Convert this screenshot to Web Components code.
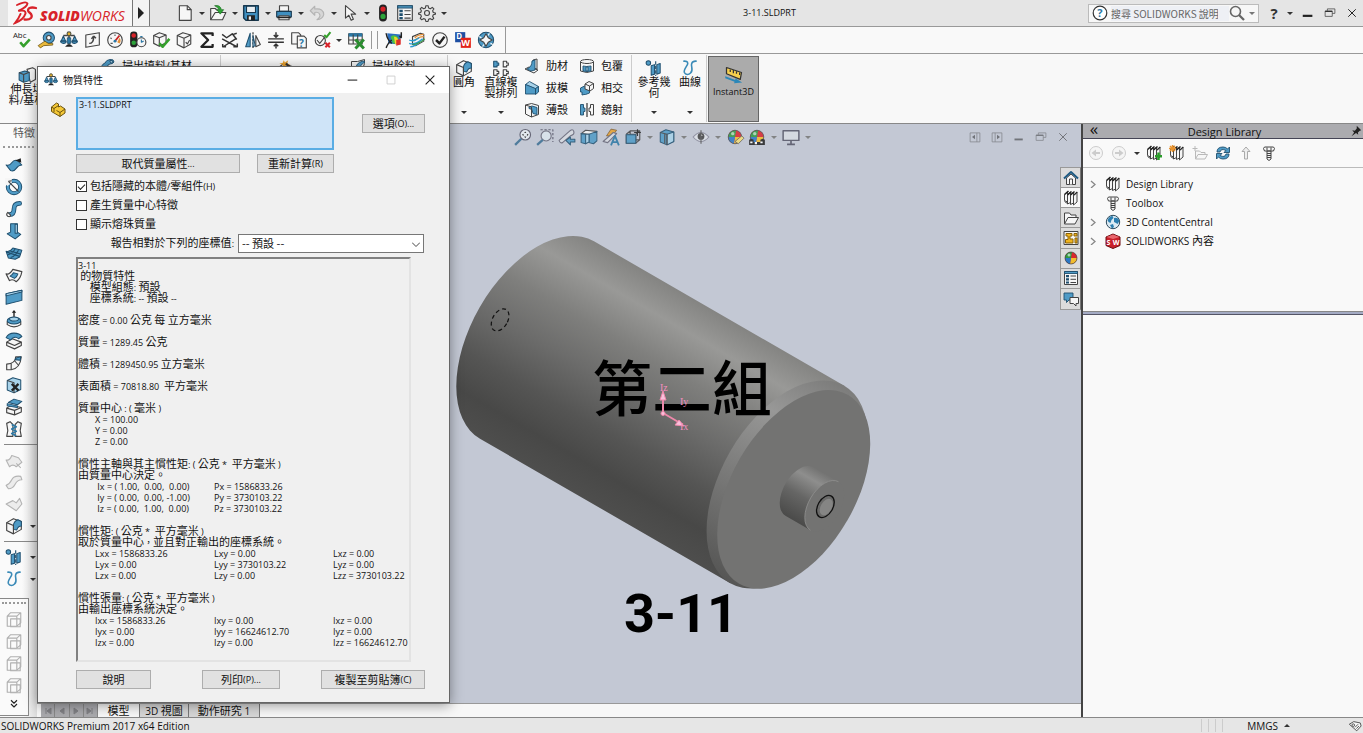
<!DOCTYPE html>
<html lang="zh-Hant">
<head>
<meta charset="utf-8">
<title>3-11.SLDPRT</title>
<style>
html,body{margin:0;height:100%;overflow:hidden}
body{font:10px/14px "Open Sans","Noto Sans CJK TC",sans-serif;color:#111}
</style>
</head>
<body>
<sw-app></sw-app>
<script>
/* ---------- icons, all on a 16 x 16 grid ---------- */
const books = '<path class="w" d="M1.500 4.500l3-2.500v10l-3-1.500zM4.500 4.500l3-2.500M4.500 4.500v9l-3-2M4.500 5l3-3v10.500l-3 1.500zM7.500 5l3-3v11l-3 1.500zM10.500 5l3.500-3v10l-3.500 3z"/><path class="k" d="M1 4l4-3.500 1 1-4 3.500zM4 4.500l4-3.500 1 1-4 3.500zM7 4.500l4-3.500 1 1-4 3.500zM10.500 5l3.500-3.500.5 1-3 3z"/>';
const ball = '<circle cx="8" cy="8" r="6" fill="#d9272e"/><path d="M8 8L2 8A6 6 0 0 1 5 2.800Q8 1.500 9 2.200z" fill="#2f9a41"/><path d="M8 8L14 8A6 6 0 0 1 7 13.900z" fill="#f2bd2c"/><path d="M8 8L2 8A6 6 0 0 0 7 13.900z" fill="#2b78c5"/><circle cx="8" cy="8" r="6" fill="none" stroke="#444" stroke-width=".7"/><circle cx="6" cy="5" r="1.500" fill="#fff" opacity=".6"/>';
const scale = '<path class="n" d="M8 2v11M3 4h10" stroke-width="1.300"/><circle cx="8" cy="2.500" r="1.700" fill="#e8b32d" stroke="#554"/><path class="b" d="M1 9l2-4.500 2 4.500zM11 9l2-4.500 2 4.500z"/><path class="b" d="M.5 9h5a2.500 2 0 0 1-5 0zM10.500 9h5a2.500 2 0 0 1-5 0z"/><path fill="#2b78a5" stroke="#1f4f6e" stroke-width=".7" d="M6.500 6h3v5h-3z"/><path class="k" d="M4.500 14l2-2h3l2 2z"/>';
const cube = '<path class="n" d="M2 5.500h8.500v8H2zM2 5.500l3.500-3h8.500l-3.500 3M14 2.500v8l-3.500 3M5.500 2.500v8L2 13.500M5.500 10.500H14"/>';
const refgeo = '<circle class="b" cx="3" cy="3.500" r="2"/><path class="b" d="M5.500 6l3-1v8.500l-3 1zM10.500 5l3-1v8.500l-3 1z"/><path stroke="#1f4f6e" stroke-dasharray="3 1" d="M9.500 2v13"/>';
const curve = '<path fill="none" stroke="#3a8ab7" stroke-width="1.400" d="M2 2q4-.500 4 2c0 2-4 5-3 8 1 2.500 4 2 5.500.5 3-3 0-6 1-8.500q1-2.500 4.500-2"/>';
const fillet = '<path class="w" d="M1.500 5l6-3.500 7 2.500v7l-7 4-6-3z"/><path class="b" d="M7.500 8q0-4 4-5.500l3 1.500v4q-3 0-4 3.500l-3-.5z"/><path class="n" d="M1.500 5l6 2.500v7.500"/>';
const bolt = '<path class="w" d="M3.500 2h9l1 1.500-1 2.500h-9l-1-2.500zM6 6h4v8l-2 1.500L6 14z"/><path class="n" d="M6 8.500h4M6 10.500h4M6 12.500h4M6 2.500v3M10 2.500v3"/>';
const list = '<path class="w" d="M1.500 1.500h13v13h-13z"/><path class="b" d="M1.500 1.500h13v2h-13z"/><path fill="#1f4f6e" d="M3 5h3v2.300H3zM3 8.300h3v2.300H3zM3 11.500h3v2H3z"/><path class="n" d="M7.500 6h5.500M7.500 9.300h5.500M7.500 12.500h5.500"/>';
const restore = '<path class="n" d="M4.500 5V2.500h10v6H11M1.500 5.500h9.500v7H1.500z"/><path class="k" d="M1.500 5h9.500v1.500H1.500z"/>';
const ICONS = {
  doc:'<path class="w" d="M3 1.500h7l3.500 3.500v9.500H3z"/><path class="n" d="M10 1.500V5h3.500"/>',
  open:'<path class="w" d="M1.500 14V4h4l1.500 1.500h3v2h5L12 14z"/><path class="n" d="M1.500 14l4-6.500h9.500"/><path fill="#2fa536" stroke="#1c6e22" stroke-width=".6" d="M5 1.500q5-1 6 3.500h2L10 9 7 5h2Q8 3 5 1.500z"/>',
  save:'<path d="M1.500 1.500h13v13h-11l-2-2z" fill="#3f8fc0" stroke="#17384f" stroke-width="1.300"/><path d="M4 2h8v5.500H4z" fill="#e8eef2" stroke="#17384f"/><path d="M4.500 10h7v4.500h-7z" fill="#222"/><path d="M6 11h2v3H6z" fill="#eee"/>',
  print:'<path class="w" d="M4 1.500h8v5H4z"/><path d="M1.500 6.500h13v5h-13z" fill="#3f8fc0" stroke="#17384f"/><path class="w" d="M3.500 10.500h9v3.500h-9z"/><path d="M2 12h12" stroke="#222" stroke-width="1.300"/>',
  undo:'<path d="M2 6l4-4v2.500q8-1 8 5-1 4-6 4.500 4-3 2-5.500-1-1.500-4-1V10z" fill="#d6d6d6" stroke="#b4b4b4"/>',
  cursor:'<path class="w" d="M4 1.500v11l3-2.500 2 4.500 2-1-2-4.500h4z"/>',
  traffic:'<rect x="4.500" y=".5" width="7" height="15" rx="3.500" fill="#222"/><circle cx="8" cy="4.500" r="2.300" fill="#d8232a"/><circle cx="8" cy="11" r="2.300" fill="#2da23a"/>',
  options:list,
  gear:'<g class="n"><circle cx="8" cy="8" r="2.200"/><path d="M7 1.500h2l.4 2 1.600.7 1.700-1.200 1.400 1.400L13 6l.6 1.600 1.900.4v1l-1.900.5L13 11l1 1.700-1.400 1.300-1.700-1-1.500.6-.5 1.900H7l-.5-1.900-1.500-.6-1.700 1L2 12.700 3 11l-.6-1.500L.5 9V8l1.900-.4L3 6 2 4.400 3.300 3 5 4.200l1.600-.7z"/></g>',
  abc:'<text x="-1" y="6" font-size="7" fill="#222">Abc</text><path fill="none" stroke="#35a02c" stroke-width="2.300" d="M5.500 10l3 3.500 5.500-6"/>',
  measure:'<circle class="b" cx="10.500" cy="6" r="5"/><circle class="w" cx="10.500" cy="6" r="2"/><path d="M1 13l6-4 3 2h4v1.500l-8 .5-3 2z" fill="#e9b93a" stroke="#6b5310" stroke-width=".7"/>',
  scale,
  section:'<path class="w" d="M2.500 3.500l12-2v11l-12 2z"/><path class="n" d="M5.500 11q4 0 4-6M9.500 4.500L7.500 7M9.500 4.500l2 2" stroke-width="1.300"/>',
  gauge:'<circle class="w" cx="8" cy="8" r="6.500"/><path d="M4 6l1 1M8 3v1.500M4 11h2" stroke="#555"/><path d="M8 9l4-5" stroke="#c22" stroke-width="1.500"/><path d="M12 6q2 3 0 5l-2-1z" fill="#e58f37"/><circle cx="8" cy="9" r="1.300" fill="#2b78a5"/>',
  trafficClock:'<rect x="1" y=".5" width="6.500" height="14" rx="3" fill="#222"/><circle cx="4.200" cy="4" r="2" fill="#d8232a"/><circle cx="4.200" cy="10.500" r="2" fill="#2da23a"/><circle class="w" cx="11" cy="10" r="4"/><path stroke="#2b78a5" fill="none" d="M11 7.500V10l2-1M10 5h2"/>',
  checkCube:'<path class="w" d="M1.500 4l5-2.500 6 2v7l-6 3-5-2.500z"/><path class="n" d="M1.500 4l5 2 6-2.500M6.500 6v7.500"/><path fill="none" stroke="#35a02c" stroke-width="2.300" d="M6.500 11l3 3 6-7"/>',
  cubeCheck:'<path class="w" d="M2 4l5-2.500 7 2v8l-6 3.500-6-3z"/><path class="n" d="M2 4l6 2.500 6-3M8 6.500V15M9.500 10l1.500 1.500 2-3.500"/>',
  sigma:'<path fill="none" stroke="#222" stroke-width="2" d="M13 4.500V2H3l6 6-6 6h10v-2.500"/>',
  deviation:'<path fill="none" stroke="#333" stroke-width="1.300" d="M1 3l4 3 5-3.500 4 5M1 7l13 7M13 7L2 14M11 14h3.500v-3M4.500 14H1.500v-2.500M11 3l3-1"/>',
  symmetry:'<path class="b" d="M1.500 14L5.500 2v12z"/><path class="w" d="M10.500 4l4 8-4 2z"/><path stroke="#333" stroke-dasharray="2 1" d="M8 1v14"/><path class="l" d="M8 4l2 9-2 1z"/>',
  thickness:'<path stroke="#333" stroke-width="1.300" fill="none" d="M1 7h14M1 10h14M8 1v4M6 3.500l2 2 2-2M8 15.500v-4M6 13.500l2-2 2 2"/>',
  compareDoc:'<path class="w" d="M1.500 1.500h6l2 2v8h-8z"/><path class="w" d="M6.500 4.500h6l2 2v8.500h-8z"/><text x="8" y="14" font-size="9" font-weight="700" fill="#2b78a5">?</text>',
  checkActive:'<circle class="w" cx="6.500" cy="8.500" r="4.500"/><path class="n" d="M3.500 8l2.500 3 4-5"/><path fill="none" stroke="#35a02c" stroke-width="1.800" d="M10 3.500l2 2L15.500 1"/><path stroke="#d8232a" stroke-width="1.800" d="M11 10.500l4 4M15 10.500l-4 4"/>',
  designTable:'<path class="w" d="M1.500 2.500h12v9h-12z"/><path fill="#2b78a5" d="M1.500 2h12v3h-12z"/><path class="n" d="M1.500 8h12M5.500 3v8.500M9.500 3v8.500"/><path stroke="#2a8c2f" stroke-width="2.600" d="M7.500 7.500l7.500 8M15 7.500l-7.500 8"/>',
  sim:'<path d="M2 2l12 1-1 9-10-1z" fill="#2b6fc0"/><path d="M5 5q4-3 7 1l-1 5H7z" fill="#4bc044"/><path d="M8 5q4 0 4 5l-3 2z" fill="#f1d52c"/><path d="M10 8l4-1v5l-4 1z" fill="#dd2f2a"/><path stroke="#222" fill="none" stroke-width="1.300" d="M1 2q1 6 5 9M14.500 1v5M13 4.500l1.500 2M6 8q-3 2-5 7"/>',
  flow:'<path class="w" d="M4 5l7-3 3 1v6l-7 4-3-1z"/><path fill="none" stroke="#e58f37" stroke-width="1.200" d="M6 6q3-3 8-3M5 9q4-4 9-4"/><path fill="none" stroke="#2b9ad0" stroke-width="1.200" d="M1 8q4 2 9-2M1 11q5 2 12-4M2 14q4 0 8-4"/><path fill="none" stroke="#3aa04a" d="M4 12q5 0 11-5"/>',
  okCircle:'<circle class="w" cx="8" cy="8" r="6.500"/><path fill="none" stroke="#222" stroke-width="2.200" d="M4.500 8l3 3 4.500-6"/>',
  dw:'<path d="M1 1h9v9H1z" fill="#1e4fa3"/><path d="M6 6h9v9H6z" fill="#e2231a"/><text x="2" y="7" font-size="7" font-weight="700" fill="#fff">D</text><text x="6.500" y="13.500" font-size="8" font-weight="700" fill="#fff">W</text>',
  compass:'<circle cx="8" cy="8" r="6.800" class="b"/><path class="w" d="M8 2.500l2 3.500 3.500 2L10 10l-2 3.500L6 10 2.500 8 6 6z"/><path stroke="#fff" d="M2 5l2 1M12 11l2 1M11 2l-1 2M5 14l1-2"/>',
  extrude:'<path class="w" d="M8 3l5-1.500 2.500 1.500v9L11 14.500z"/><path class="b" d="M1 6l5-1.500 4 1V13l-5 1.500-4-2z"/><path class="n" d="M1 6l4 1.500 5-2M5 7.500v7"/>',
  sweep:'<path class="b" d="M2 13q-2-6 3-8 1-3 5-3.500 4-.5 4 2.500-1 2-4 2l-2 1q0 4-3 6z"/><path class="l" d="M10 2.500q3-.5 3 1.500-2 2-3 0z"/>',
  wizard:'<path class="w" d="M1 8l5-4 8 3v6l-8 2-5-3z"/><path fill="#e9a12d" d="M6 1l1 2 3-2-1 3 3 1-4 1-2 2-1-3-3-1 3-.500z"/><path stroke="#333" stroke-width="2" d="M8 4l5 5"/>',
  cut:'<path class="w" d="M1.500 3.500h6l7-2v4l-3 9h-10z"/><path class="b" d="M6 12Q5 5 13 3l2 1Q9 7 10 13z"/>',
  fillet,
  pattern:'<path class="b" d="M1.500 2h3v1.500h1.500v2h-1.500V7h-3z"/><path class="w" d="M10 2h3v1.500h1.500v2H13V7h-3zM1.500 9.500h3V11h1.500v2h-1.500v1.500h-3zM10 9.500h3V11h1.500v2H13v1.500h-3z"/>',
  rib:'<path class="w" d="M1 11l4-2 9 3-4 3zM9 2l4-1v10l-4-1z"/><path class="b" d="M3 11q5-2 5-8l3-1v10l-4 1z"/>',
  draft:'<path class="l" d="M1.500 4.500l4-3 9 5-3 2.500z"/><path class="b" d="M1.500 4.500l10 4V14h-10zM11.500 8.500l3-2V12l-3 2.500z"/>',
  shell:'<path class="w" d="M1.500 3l6-1.500 7 2v9l-7 2.500-6-3z"/><path class="b" d="M5 5l3-1 5 1.500v7l-4-1-1-4-3-1z"/><path class="n" d="M1.500 3l6 2v10"/>',
  wrap:'<path class="w" d="M1.500 4v9q6 3 13 0V4z"/><ellipse class="w" cx="8" cy="3.500" rx="6.500" ry="2"/><path class="b" d="M4 8q3 1 8 0v5q-4 1-8 0z"/><path class="l" d="M7 9h2v4H7z"/>',
  intersect:'<path class="b" d="M1.500 8l4-2 5 1v6l-4 1.500H5L3 15v-3H1.500z"/><path class="w" d="M6 4l4-2.500 4.500 2v5L11 11 6 9z"/><path class="n" d="M6 4l4.500 2 4-2.500M10.500 6v5"/>',
  mirror:'<path class="b" d="M1.500 2.500h3V6H6v3.500H4.500V13h-3z"/><path class="w" d="M14.500 2.500h-3V6H10v3.500h1.500V13h3z"/><path stroke="#333" stroke-width="1.200" d="M8 1v14"/>',
  refgeo, curve,
  ruler:'<path d="M2 2l12 4-1 5.500L2 7z" fill="#f6cf4e" stroke="#333"/><path stroke="#333" d="M5 3.500v2M7.500 4v2.500M10 5v2M12.500 6v2"/><path fill="#2b87b8" d="M1 9l8 3 0-1.500 5.500 3.500-6.500.5.500-1.200L1 10.500z"/>',
  surfExtrude:'<path class="b" d="M1 8q3 1 5-2t5-2l4 4q-3 0-5 3t-5 2z"/><path d="M9 4l5-2 .5 4z" class="k"/>',
  revolve:'<circle cx="8" cy="8" r="5.500" fill="none" stroke="#1f4f6e" stroke-width="3.600"/><circle cx="8" cy="8" r="5.500" fill="none" stroke="#4f9bc6" stroke-width="2"/><path fill="#f6f6f6" d="M0 0h6v4.500L2 7 0 5z"/><path class="n" d="M3 3l9 9M3 3l3-.500"/>',
  sweep2:'<path fill="none" stroke="#1f4f6e" stroke-width="4.200" stroke-linecap="round" d="M4 13q4 0 4-5t5-5"/><path fill="none" stroke="#4f9bc6" stroke-width="2.600" stroke-linecap="round" d="M4 13q4 0 4-5t5-5"/><path class="w" d="M2.500 11q-2 2 0 3.500 2 1 2.500-1z"/>',
  lofted:'<path class="b" d="M5 1.500h6V9l3 2-5 4-7-4.500L5 9z"/><path class="l" d="M9 2h2v8H9z"/>',
  boundary:'<path class="b" d="M1 6.500q3 1 6-3l8 2-2 6-4 2-6-1z"/><path stroke="#1f4f6e" fill="none" d="M2 9.500q4 0 7-5M5 12q4-1 7-6.500M1 7l12 4M4 6l10 3"/>',
  fillSurf:'<path class="w" d="M1 7q3 1 6-4l8 2q-1 6-5 9-3-3-6-1z"/><path class="b" d="M4.500 9q2-1 3-3l4 1q-1 3-3 4z"/>',
  planar:'<path class="b" d="M1 5l14-3v9L1 14.500z"/><path class="l" d="M1 5l14-3v1.500L1 7z" stroke="none"/>',
  offset:'<path class="w" d="M2 10q6 4 12 0v3q-6 4-12 0z"/><ellipse class="b" cx="8" cy="9.500" rx="6" ry="3"/><ellipse class="l" cx="8" cy="8" rx="4" ry="1.800"/><path class="k" d="M8 0l2 2.500H8.600V6H7.400V2.500H6z"/>',
  thicken:'<path class="w" d="M1.500 9l5-3 8 3v3l-6 3-7-3z"/><path class="b" d="M1 5q2-4 7-4t7 3l-3 2Q9 3 5 7z"/><path class="n" d="M1.500 9l7 3 6-3"/>',
  flatten:'<path class="w" d="M1.500 9v5h4q8-1 9-11.500h-5q0 6-8 6.500z"/><path class="n" d="M5.500 8.500v5.500M8.500 6l3.500 4"/><path class="b" d="M10 3.500l4-1-.5 3-4.500-.5z"/>',
  deleteFace:'<path class="l" d="M2 4l5-2.500 7 2v8.500l-6 3-6-2.500z"/><path class="n" d="M2 4l6 2v9"/><path stroke="#222" stroke-width="2" d="M6 7l6 6M12 7l-6 6"/>',
  replaceFace:'<path class="b" d="M3 4l5-3 7 2-4 3z"/><path class="w" d="M1.500 9l4-2.500 9 2v4l-6 2.500-7-2z"/><path class="n" d="M1.500 9l7 2 6-2.500M8.500 11v4"/><path class="b" d="M2 5l9 2v1.500L2 7z"/>',
  knit:'<path class="w" d="M1.500 3l3-1.500L7 4v10.500H1.500l1-5zM14.500 3l-3-1.500L9 4v10.500h5.500l-1-5z"/><path stroke="#2b78a5" stroke-width="1.500" fill="none" d="M6 4l4 2-4 2 4 2-4 2 4 2"/>',
  dimSurf:'<path class="d" d="M1 8q3 1 5-4l6 2 3 4-5 4q-3-3-6 0z"/><path class="d" d="M10 11l4 4"/>',
  dimExtend:'<path class="d" d="M1 11q3-1 5-5t8-3l1 3q-4 0-6 4t-6 4z"/>',
  dimTrim:'<path class="d" d="M1 8l6-3 3 2 3-4 2 5-5 6z"/>',
  dimCube:'<g opacity=".4"><path class="n" d="M2 4.500h8.500v9H2zM2 4.500l3-3h9v9l-3.500 3M10.500 4.500l3.500-3"/><path class="n" d="M5 7h8.500v7H5z"/></g>',
  part:'<path d="M1.500 6l5-4 2 1v3l2-1 4.500 3v4l-5 3.500-8.500-5z" fill="#f5c836" stroke="#6b5310"/><path fill="none" stroke="#6b5310" d="M1.500 6l2.500 1.500 4.500-3M4 7.500V11M6.500 9.500l3.500 2 5-3.500M10 11.500v4"/>',
  zoomFit:'<circle cx="10" cy="6" r="4.700" fill="#e8eef4" stroke="#556"/><path class="k" d="M10 3l1 1.500H9zM10 9L9 7.500h2zM7 6l1.500-1v2zM13 6l-1.500 1V5z"/><path stroke="#3b6f93" stroke-width="2" d="M6.500 9.500L1 15"/>',
  zoomArea:'<path fill="none" stroke="#556" stroke-dasharray="2 1.500" d="M4 1.500h11v11"/><circle cx="9" cy="7" r="4.500" fill="#dbe6ee" stroke="#667"/><path stroke="#3b6f93" stroke-width="2" d="M6 10.500L1 15"/>',
  prevView:'<path fill="#d9dde3" stroke="#667" d="M1 11l9-8q3-3 4 0t-3 4l-7 6q-2 1-3-2z"/><path class="b" d="M7 11l4-3v2h4v2.500h-4V15z"/>',
  sectionView:'<path class="w" d="M1 5l4-3 10 1-3 3z"/><path class="b" d="M1 5l4 .5V14l-4-1zM8 5.500l7-2.500v8.500l-3 2.500-4-1z"/><path class="l" d="M5 5.500h3v7l-3 1.500z"/>',
  annot:'<path fill="#e9a12d" stroke="#76501b" stroke-width=".7" d="M4 7l4-6 5 1-4 5z"/><path fill="#d9dde3" stroke="#667" d="M1 12l9-8 3 1-8 8z"/><path fill="none" stroke="#2b78a5" stroke-width="1.600" d="M8 15.500L11.500 7 15 15.500M9.500 12.500h4"/>',
  orient:cube+'<path class="b" d="M2 6h8.500v7.500H2z"/><path stroke="#222" d="M12 1v6M9 4h6"/>',
  display:'<path class="b" d="M2 4l5-2.500 7 2v8.500l-6 3-6-2.500z"/><path class="l" d="M8 5.500l6-2v8.500l-6 3z"/><path class="n" d="M2 4l6 1.500V15M6 5v9"/>',
  eye:'<path fill="#dfe3e9" stroke="#889" d="M1 8q7-8 14 0-7 8-14 0z"/><circle cx="8" cy="7.500" r="3" fill="#444"/><path fill="#fff" d="M8 5l1.500 2H8z"/><path stroke="#555" d="M8 2v12"/>',
  appearance:ball+'<path fill="#f3de78" stroke="#555" stroke-width=".7" d="M8 12l6-5 2 2-5 5z"/>',
  scene:ball+'<path fill="#222" d="M1 10.500l2-1 2 1v2h6v-2l2-1 2 1v4.500H1z"/><path fill="#fff" d="M2 12h2v1.500H2zM6 12.500h2v2H6zM11 12h2v1.500h-2z"/>',
  monitor:'<path fill="#d9dde3" stroke="#556" stroke-width="1.300" d="M1 2.500h14v8.500H1z"/><path stroke="#556" stroke-width="1.500" d="M8 11v3M4.500 14.500h7"/>',
  paneL:'<path class="n" d="M1.500 2.500h13v12h-13zM10.500 2.500v12"/><path class="k" d="M8 5v6L4 8z"/>',
  paneR:'<path class="n" d="M1.500 2.500h13v12h-13zM5.500 2.500v12"/><path class="k" d="M8 5v6l4-3z"/>',
  min:'<path class="k" d="M2 10h11v2.500H2z"/>',
  thinMin:'<path class="k" d="M3 7.500h11v1.200H3z"/>',
  maxOff:'<path fill="none" stroke="#ccc" d="M3.500 3.500h9v9h-9z"/>',
  restore,
  close:'<path stroke="#222" stroke-width="1.300" d="M3 3l10 10M13 3L3 13"/>',
  home:'<path class="w" d="M3.500 8v6.500h9V8L8 4z"/><path class="w" d="M6.500 14.500V9h3v5.500"/><path fill="none" stroke="#1f5b83" stroke-width="2" d="M1 8.500l7-6.500 7 6.500"/>',
  books,
  booksAdd:books+'<path stroke="#2a9d2a" stroke-width="2.500" d="M12.500 7.500V15M9 11.300h7"/>',
  booksNew:books+'<path stroke="#e9932d" stroke-width="1.400" d="M3.500 0v7M0 3.500h7M1 1l5 5M6 1L1 6"/>',
  folder:'<path class="w" d="M1.500 14V3h5l1.500 2h5v2.500"/><path class="w" d="M1.500 14l3.500-6.500h10.500L12 14z"/>',
  folderNew:'<g opacity=".35"><path class="w" d="M3.500 14V6h4l1.500 1.500h4v2"/><path class="w" d="M3.500 14L6 9.500h9.500L13 14z"/><path class="n" d="M3 1v5M.5 3.500h5"/></g>',
  refresh:'<path class="b" d="M2 7q0-5 6-5 3 0 4.500 2L14.500 2v5.500H9L11 5.500Q6 3 5 7zM14 9q0 5-6 5-3 0-4.500-2L1.500 14V8.500H7L5 10.500Q10 13 11 9z"/>',
  up:'<path fill="#eee" stroke="#aaa" d="M8 2l4 4.500H9.500V14h-3V6.500H4z"/>',
  bolt,
  back:'<circle cx="8" cy="8" r="6.500" fill="#f5f5f5" stroke="#ccc"/><path fill="#ccc" d="M3.500 8L8 4.500V7h4v2H8v2.500z"/>',
  fwd:'<circle cx="8" cy="8" r="6.500" fill="#f5f5f5" stroke="#ccc"/><path fill="#ccc" d="M12.500 8L8 4.500V7H4v2h4v2.500z"/>',
  palette:'<path class="w" d="M1 1.500h14v13H1z"/><path fill="#f0b41f" stroke="#8a6208" d="M3 3.500h6V6H7v3h3v4H2.500V9.500H5V6H3zM11 3.500h3V6h-3zM12 8h2v5h-2z"/>',
  ball, list,
  forum:'<path class="b" d="M1 2h9v7H6l-2.500 2.500V9H1z"/><path class="w" d="M7 6.500h8.500v6H13V15l-2.500-2.500H7z"/>',
  globe:'<circle cx="8" cy="8" r="6.700" fill="#dcebf4" stroke="#2d4a5c"/><path fill="#2d7fb0" d="M2.500 6q2-4 5-4l1 2-2 2-1 3-2-1zM9 4q4-1 5.500 3l-2 3-1.500-1-2-1zM5 11l3-1 1 3-2 1.500z"/>',
  swCube:'<path fill="#c9202a" stroke="#6b0d12" d="M1 4l7-3 7 3v8.500L8 15.500l-7-3z"/><path fill="#e8666d" d="M1.500 4L8 1.500 14.500 4 8 6z"/><text x="1.500" y="12" font-size="7" font-weight="700" fill="#fff">S</text><text x="7.800" y="12" font-size="7" font-weight="700" fill="#fff">W</text>',
  pin:'<path fill="#222" d="M9 1l6 6-2 .5-2.500 2.500.5 3-3-2.500L2 15l3.500-5L3 7l3.500.5L9 4.500z"/>',
  helpBall:'<circle cx="8" cy="8" r="6.800" fill="#fff" stroke="#333" stroke-width="1.200"/><text x="5.200" y="12" font-size="11" font-weight="700" fill="#2b78a5">?</text>',
  search:'<circle cx="6.500" cy="6.500" r="5" fill="none" stroke="#666" stroke-width="1.600"/><path stroke="#666" stroke-width="2.300" d="M10 10l5 5"/>',
  tag:'<path class="w" d="M1.500 6l5-3 7.500 1.500 1 3.500-5 5.500z"/><circle cx="6" cy="7" r="1.500" class="n"/><path class="n" d="M8 9.500l3.500-3.500M9.500 11L12.500 8"/>',
  chev:'<path fill="none" stroke="#222" stroke-width="1.500" d="M4 3l4 4 4-4M4 8l4 4 4-4"/>'
};

/* ---------- shared helpers ---------- */
const BASE = `
*{box-sizing:border-box}
button{font:inherit;color:inherit;background:none;border:0;padding:0;margin:0;display:flex;align-items:center;justify-content:center}
.han{font-size:11px;line-height:0}
.caret{width:0;height:0;border:3px solid transparent;border-top-color:var(--caret,#333);border-bottom:0}
`;
/* Han runs are set at 11px next to smaller Latin text. */
function sizeHan(root){
  const walker = document.createTreeWalker(root, NodeFilter.SHOW_TEXT), nodes = [];
  while (walker.nextNode()) nodes.push(walker.currentNode);
  for (const n of nodes) {
    if (n.parentElement && n.parentElement.closest('style,svg,option,.own')) continue;
    if (!/[\u3000-\u9fff]/.test(n.data)) continue;
    const out = document.createDocumentFragment();
    for (const part of n.data.split(/([\u3000-\u9fff]+)/)) {
      if (!part) continue;
      if (/[\u3000-\u9fff]/.test(part)) {
        const s = document.createElement('span');
        s.className = 'han'; s.textContent = part; out.append(s);
      } else out.append(part);
    }
    n.replaceWith(out);
  }
}
function element(name, css, html){
  customElements.define(name, class extends HTMLElement {
    connectedCallback(){
      if (this.shadowRoot) return;
      const t = document.createElement('template');
      t.innerHTML = `<style>${BASE}${css}</style>` + (typeof html === 'function' ? html(this) : html);
      const root = this.attachShadow({mode:'open'});
      const content = t.content.cloneNode(true);
      sizeHan(content);
      root.append(content);
    }
  });
}
const at = (el, n, d='') => el.getAttribute(n) ?? d;

element('sw-icon', `
:host{display:block;flex:none;width:16px;height:16px}
:host([size="18"]){width:18px;height:18px}
:host([size="20"]){width:20px;height:20px}
:host([size="14"]){width:14px;height:14px}
:host([size="12"]){width:12px;height:12px}
svg{display:block;width:100%;height:100%;overflow:visible}
.b{fill:#4f9bc6;stroke:#1f4f6e;stroke-width:.9}.l{fill:#a9d3ea;stroke:#1f4f6e;stroke-width:.9}
.w{fill:#f6f6f6;stroke:#444}.n{fill:none;stroke:#444}.k{fill:#222}.d{fill:#ececec;stroke:#b4b4b4}
`, e => `<svg viewBox="0 0 16 16" stroke-linejoin="round" aria-hidden="true">${ICONS[at(e,'name')]}</svg>`);

element('sw-tool', `
:host{display:flex;flex:none;align-items:center}
.main{width:var(--cell,22px);height:22px}
.drop{width:var(--drop,11px);height:22px}
`, e => `<button class="main" aria-label="${at(e,'icon')}"><sw-icon name="${at(e,'icon')}" size="${at(e,'size','18')}"></sw-icon></button>${e.hasAttribute('drop')?`<button class="drop" aria-label="${at(e,'icon')} menu"><i class="caret"></i></button>`:''}`);

/* "new" or "new+" : the plus adds a drop-down arrow */
const tools = (names, size='18') => names.split(' ').map(n => `<sw-tool icon="${n.replace('+','')}" size="${size}"${n.endsWith('+')?' drop':''}></sw-tool>`).join('');

element('sw-titlebar', `
:host{display:flex;align-items:center;height:26px;background:#e5e5e5;position:relative}
.brand{display:flex;align-items:center;width:124px;height:26px;margin-left:8px;background:#f7f7f7;padding-left:5px;color:#d8232a}
.brand svg{width:25px;height:24px}
.brand b,.brand span{font-size:14px;font-style:italic;line-height:24px;padding-top:5px}
.brand b{font-weight:800;margin-left:2px}
.brand span{font-weight:400}
.fly{width:18px;height:26px;background:#f3f3f3;border:1px solid #777;border-width:0 1px}
.fly i{border:6px solid transparent;border-left:6px solid #222;border-right:0}
nav{display:flex;margin-left:24px}
h1{position:absolute;left:0;right:0;text-align:center;margin:0 0 0 176px;font-size:9px;font-weight:400;pointer-events:none}
.right{margin-left:auto;display:flex;align-items:center}
.search{display:flex;align-items:center;width:171px;height:19px;border:1px solid #bbb;background:#f7f7f7;padding-left:3px}
.search input{flex:1;min-width:0;border:0;background:#eef0f5;height:15px;font:10px/15px "Noto Sans CJK TC",sans-serif;color:#333;margin-left:3px;padding:0}
.search input::placeholder{color:#666;opacity:1}
.search .caret{margin:0 3px 0 4px;--caret:#777}
.q{width:22px;font-size:15px;font-weight:700;margin-left:4px;color:#333}
.q+.caret{margin:0 4px 0 2px;border-width:3px 3px 0}
.w{width:22px;height:22px}
`, `
<div class="brand"><svg viewBox="0 0 25 24" fill="none" stroke="#d8232a" stroke-linecap="round" aria-hidden="true"><path stroke-width="1.800" d="M4 4Q13-.5 14.500 2.500 14 6 6 9.500"/><path stroke-width="2" d="M6 9.800q7-1.300 6.500 2.700Q10.500 19 2 22 6 17 7.500 13"/><path stroke-width="2.300" d="M23 7q-4-1-6.500 0-3 2 0 4.500 3.500 3 1.500 5.500-2 2-6.500 1.500"/></svg><b>SOLID</b><span>WORKS</span></div>
<button class="fly" aria-label="menu"><i></i></button>
<nav>${tools('doc+ open+ save+ print+ undo+ cursor+ traffic options gear+')}</nav>
<h1>3-11.SLDPRT</h1>
<div class="right">
 <label class="search"><sw-icon name="helpBall"></sw-icon><input type="search" placeholder="搜尋 SOLIDWORKS 說明" aria-label="搜尋"><sw-icon name="search"></sw-icon><i class="caret"></i></label>
 <button class="q">?</button><i class="caret"></i>
 <button class="w" aria-label="minimize"><sw-icon name="min" size="14"></sw-icon></button>
 <button class="w" aria-label="restore"><sw-icon name="restore" size="12"></sw-icon></button>
 <button class="w" aria-label="close"><sw-icon name="close" size="12"></sw-icon></button>
</div>`);

element('sw-toolrow', `
:host{display:flex;height:28px;border:1px solid #999;border-width:1px 0;background:#f9f9f9;--cell:23px}
.grip{width:2px;margin:3px 5px 3px 4px;border-left:2px dotted #999}
.strip{display:flex;align-items:center;border-right:1px solid #999;padding-right:8px}
.sep{width:7px;height:18px;margin:0 4px;border:1px solid #999;border-width:0 1px}
`, `<div class="strip"><span class="grip"></span>${tools('abc measure scale section gauge trafficClock checkCube cubeCheck sigma deviation symmetry thickness compareDoc checkActive+ designTable')}<span class="sep"></span>${tools('sim flow okCircle dw compass')}</div>`);

element('sw-big', `
:host{display:block;flex:none;width:var(--w,36px)}
button{flex-direction:column;justify-content:flex-start;width:100%;height:68px;padding-top:4px;line-height:11px;position:relative}
.t{text-align:center;white-space:nowrap}
.caret{position:absolute;bottom:9px;left:calc(50% - 3px)}
`, e => `<button><sw-icon name="${at(e,'icon')}" size="18"></sw-icon><span class="t">${at(e,'label').replace('|','<br>')}</span>${e.hasAttribute('drop')?'<i class="caret"></i>':''}</button>`);

element('sw-small', `
:host{display:block}
button{height:22px;gap:6px;justify-content:flex-start;white-space:nowrap}
`, e => `<button><sw-icon name="${at(e,'icon')}" size="16"></sw-icon><span>${at(e,'label')}</span></button>`);

element('sw-ribbon', `
:host{display:flex;height:70px;background:#f8f8f8;border-bottom:1px solid #888;padding-top:1px}
section{display:flex;flex:none;border-right:1px solid #ccc;height:67px}
.col{display:flex;flex-direction:column}
.a{width:221px;padding-top:7px}.a .col{margin:-7px 0 0 46px}
.b{width:227px;padding-left:54px}.b sw-icon{margin-top:4px;margin-left:2px}.b .col{margin-left:55px}
.c{width:184px}.c .col{margin-left:2px}.c .col+.col{margin-left:11px}
.d{width:75px;padding-left:4px}
.i{width:51px;margin:1px 0 1px 1px;height:66px;background:#ababab;border:1px solid #666;flex-direction:column;justify-content:flex-start;font-size:9px;padding-top:8px}
`, `
<section class="a"><sw-big icon="extrude" label="伸長填|料/基材" style="--w:54px"></sw-big><div class="col"><sw-small icon="sweep" label="掃出填料/基材"></sw-small></div></section>
<section class="b"><sw-icon name="wizard" size="18"></sw-icon><div class="col"><sw-small icon="cut" label="掃出除料"></sw-small></div></section>
<section class="c"><sw-big icon="fillet" label="圓角" drop style="--w:32px"></sw-big><sw-big icon="pattern" label="直線複|製排列" drop style="--w:42px"></sw-big>
<div class="col"><sw-small icon="rib" label="肋材"></sw-small><sw-small icon="draft" label="拔模"></sw-small><sw-small icon="shell" label="薄殼"></sw-small></div>
<div class="col"><sw-small icon="wrap" label="包覆"></sw-small><sw-small icon="intersect" label="相交"></sw-small><sw-small icon="mirror" label="鏡射"></sw-small></div></section>
<section class="d"><sw-big icon="refgeo" label="參考幾|何" drop></sw-big><sw-big icon="curve" label="曲線" drop></sw-big></section>
<button class="i"><sw-icon name="ruler" size="20"></sw-icon>Instant3D</button>`);

element('sw-sidebar', `
:host{display:flex;flex-direction:column;width:37px;flex:none;background:linear-gradient(90deg,#fafafa 60%,#dcdcdc);--cell:28px;--drop:9px}
.tab{height:21px;padding:2px 0 0 13px;white-space:nowrap;color:#555;overflow:hidden}
.grip{height:0;border-top:2px dotted #999;margin:1px 3px 6px}
.sep{height:1px;background:#888;margin:4px 0 4px 4px}
.lower{width:29px;border:1px solid #888;border-left:0;margin-top:8px;height:118px;padding-top:3px;background:#fafafa;--cell:27px}
.lower .grip{margin:0 2px 5px}
.more{width:28px;height:14px}
`, `
<div class="tab">特徵</div><div class="grip"></div>
${tools('surfExtrude revolve sweep2 lofted boundary fillSurf planar offset thicken flatten deleteFace replaceFace knit')}
<div class="sep"></div>${tools('dimSurf dimExtend dimTrim fillet+')}
<div class="sep"></div>${tools('refgeo+ curve+')}
<div class="lower"><div class="grip"></div>${tools('dimCube dimCube dimCube dimCube')}<button class="more" aria-label="more"><sw-icon name="chev" size="12"></sw-icon></button></div>`);

element('sw-viewport', `
:host{display:block;flex:1;min-width:0;position:relative;background:#c3c8d4;overflow:hidden;--drop:12px;--caret:#777}
.model{position:absolute;inset:0;width:100%;height:100%}
.view{position:relative;display:flex;justify-content:center;padding-top:2px;opacity:.85}
.win{position:absolute;top:2px;right:7px;display:flex;opacity:.5}
.win button{width:22px;height:22px}
.tabs{position:absolute;top:43px;right:0;width:21px;height:143px;display:grid;grid-auto-rows:1fr;background:#dcdcdc;border:1px solid #999;border-right-color:#777}
.tabs button{border-bottom:1px solid #999}
.tabs button:last-child{border:0}
.tabs .on{background:#f8f8f8}
`, `
<svg class="model" viewBox="244 124 837 579" role="img" aria-label="3-11">
 <defs>
  <linearGradient id="side" gradientUnits="userSpaceOnUse" x1="0" y1="-114" x2="0" y2="114">
   <stop offset="0" stop-color="#848482"/><stop offset=".14" stop-color="#999997"/><stop offset=".32" stop-color="#7f7f7d"/><stop offset=".5" stop-color="#6c6c6b"/><stop offset=".7" stop-color="#555554"/><stop offset=".86" stop-color="#484847"/><stop offset="1" stop-color="#4e4e4d"/>
  </linearGradient>
  <linearGradient id="rim" gradientUnits="userSpaceOnUse" x1="0" y1="-114" x2="0" y2="114">
   <stop offset="0" stop-color="#7c7c7b"/><stop offset=".25" stop-color="#989897"/><stop offset=".55" stop-color="#7d7d7c"/><stop offset="1" stop-color="#565655"/>
  </linearGradient>
  <linearGradient id="boss" gradientUnits="userSpaceOnUse" x1="0" y1="-28" x2="0" y2="28">
   <stop offset="0" stop-color="#747473"/><stop offset=".2" stop-color="#8e8e8d"/><stop offset=".55" stop-color="#666665"/><stop offset="1" stop-color="#4a4a49"/>
  </linearGradient>
 </defs>
 <g transform="translate(537 340) rotate(30)">
  <path fill="url(#side)" d="M0-114H289V114H0A66 114 0 0 1 0-114z"/>
  <ellipse cx="289" cy="0" rx="66" ry="114" fill="url(#rim)"/>
  <ellipse cx="297" cy="1" rx="62" ry="109" fill="#737372"/>
  <path fill="url(#boss)" d="M303-28H332V28H303A16 28 0 0 1 303-28z"/>
  <ellipse cx="332" cy="0" rx="16" ry="28" fill="#737372"/>
  <path d="M332-28A16 28 0 0 0 332 28" fill="none" stroke="#8d8d8c" stroke-width=".8"/>
  <ellipse cx="333" cy="0" rx="7.500" ry="12" fill="#6a6a69" stroke="#111" stroke-width="1.300"/>
  <ellipse cx="334" cy="0" rx="5.500" ry="9" fill="#858584"/>
  <ellipse cx="-42" cy="1" rx="7.500" ry="12" fill="none" stroke="#111" stroke-width="1.200" stroke-dasharray="4 3"/>
 </g>
 <g font-family="Noto Sans CJK TC" font-size="60" font-weight="500" text-anchor="middle"><text x="682" y="411">第二組</text></g>
 <text x="681" y="632" font-family="Roboto" font-size="54" font-weight="700" text-anchor="middle">3-11</text>
 <g stroke="#e8a" stroke-width="2" fill="#f9c0dc"><path d="M663 413V396M663 413l17 10"/><path d="M663 391l3 9h-6zM684 426l-9-1 4-5z" stroke-width="1"/><circle cx="663" cy="413.500" r="2" stroke-width="1"/></g>
 <g font-family="Liberation Serif" font-size="10" fill="#f48fc0"><text x="660" y="391">Iz</text><text x="680" y="405">Iy</text><text x="680" y="430">Ix</text></g>
</svg>
<div class="view">${tools('zoomFit zoomArea prevView sectionView annot orient+ display+ eye+ appearance scene+ monitor+')}</div>
<div class="win">${['paneL','paneR','min','restore','close'].map(n=>`<button aria-label="${n}"><sw-icon name="${n}" size="12"></sw-icon></button>`).join('')}</div>
<div class="tabs">${['home','books','folder','palette','ball','list','forum'].map(n=>`<button aria-label="${n}"${n==='books'?' class="on"':''}><sw-icon name="${n}"></sw-icon></button>`).join('')}</div>`);

element('sw-tabs', `
:host{display:flex;height:14px;background:#f7f7f7;border-top:1px solid #999;padding-left:4px;line-height:12px}
.nav{display:flex;width:57px;background:#a9a9ad}
.nav button{flex:1;border-right:1px solid #888;font-size:8px;color:#777}
.nav svg{width:8px;height:8px}
.t{border-right:1px solid #777;background:#d6d6d6;white-space:nowrap}
.on{background:#f7f7f7;width:42px}.m{width:49px}.s{width:71px}
`, `<span class="nav">${['M2 1v6M7 1L3 4l4 3z','M6 1L2 4l4 3z','M2 1l4 3-4 3z','M6 1v6M1 1l4 3-4 3z'].map(d=>`<button aria-label="scroll tabs"><svg viewBox="0 0 8 8" fill="#808084" stroke="#808084"><path d="${d}"/></svg></button>`).join('')}</span>
<button class="t on"><span>模型</span></button><button class="t m"><span>3D 視圖</span></button><button class="t s"><span>動作研究 1</span></button>`);

element('sw-taskpane', `
:host{display:flex;flex-direction:column;width:282px;flex:none;border-left:2px solid #444;background:#f9f9f9}
header{display:flex;align-items:center;height:15px;background:#ababaf;border-bottom:1px solid #445;padding:0 1px 0 6px;color:#111}
header button{font-size:17px;line-height:10px;width:10px;padding-bottom:4px}
h2{flex:1;margin:0;text-align:center;font-size:11px;font-weight:400;line-height:13px}
.bar{display:flex;align-items:center;height:29px;border-bottom:1px solid #bbb;padding-left:1px;--cell:23px}
.bar .caret{margin:0 2px 0 4px}
ul{list-style:none;margin:0;padding:6px 0 0;height:144px;border-bottom:1px solid #888}
li{display:flex;align-items:center;height:19px}
li svg{width:8px;height:8px;margin:0 8px 0 6px;flex:none}
li a{color:inherit;text-decoration:none;margin-left:5px}
.split{height:3px;background:#a4abc4;border-bottom:1px solid #556}
`, `
<header><button aria-label="collapse">«</button><h2>Design Library</h2><sw-icon name="pin" size="12"></sw-icon></header>
<div class="bar">${tools('back fwd','16')}<i class="caret"></i>${tools('booksAdd booksNew folderNew refresh up bolt','16')}</div>
<ul>${[['books','Design Library',1],['bolt','Toolbox',0],['globe','3D ContentCentral',1],['swCube','SOLIDWORKS 內容',1]].map(([i,t,c])=>`<li><svg viewBox="0 0 8 8" fill="none" stroke="#888" stroke-width="1.300"><path d="${c?'M2 1l4 3.500-4 3.500':''}"/></svg><sw-icon name="${i}"></sw-icon><a href="#">${t}</a></li>`).join('')}</ul>
<div class="split"></div>`);

element('sw-status', `
:host{display:flex;align-items:center;height:16px;border-top:1px solid #888;background:#e6e6e6;padding:0 1px}
.cells{margin-left:auto;display:flex;width:30px;height:13px;margin-right:16px;gap:6px}
.cells i{border-left:1px solid #ccc}
.up{width:0;border:3px solid transparent;border-bottom-color:#333;border-top:0;margin:0 58px 0 6px}
`, `<span>SOLIDWORKS Premium 2017 x64 Edition</span><span class="cells"><i></i><i></i><i></i><i></i></span><span>MMGS</span><i class="up"></i><sw-icon name="tag" size="14"></sw-icon>`);

const grid = rows => `<table>${rows.map(r => `<tr>${r.map(c => `<td>${c}</td>`).join('')}</tr>`).join('')}</table>`;
element('sw-report', `
:host{display:block;border:2px solid #808080;border-color:#808080 #e3e3e3 #e3e3e3 #808080;font-size:9px;line-height:11px;white-space:pre;padding-top:1px}
p{margin:0 0 11px}
p.t{margin:0}
table{border-collapse:collapse;table-layout:fixed;width:357px;margin:0 0 12px 17px}
td{padding:0;width:119px;height:11px}
`, `<p>3-11
 的物質特性
     模型組態: 預設
     座標系統: -- 預設 --</p><p>密度 = 0.00 公克 每 立方毫米</p><p>質量 = 1289.45 公克</p><p>體積 = 1289450.95 立方毫米</p><p>表面積 = 70818.80  平方毫米</p><p class="t">質量中心 : ( 毫米 )</p>${grid([['X = 100.00'],['Y = 0.00'],['Z = 0.00']])}<p class="t">慣性主軸與其主慣性矩: ( 公克 *  平方毫米 )
由質量中心決定。</p>${grid([[' Ix = ( 1.00,  0.00,  0.00)','Px = 1586833.26',''],[' Iy = ( 0.00,  0.00, -1.00)','Py = 3730103.22',''],[' Iz = ( 0.00,  1.00,  0.00)','Pz = 3730103.22','']])}<p class="t">慣性矩: ( 公克 *  平方毫米 )
取於質量中心，並且對正輸出的座標系統。</p>${grid([['Lxx = 1586833.26','Lxy = 0.00','Lxz = 0.00'],['Lyx = 0.00','Lyy = 3730103.22','Lyz = 0.00'],['Lzx = 0.00','Lzy = 0.00','Lzz = 3730103.22']])}<p class="t">慣性張量: ( 公克 *  平方毫米 )
由輸出座標系統決定。</p>${grid([['Ixx = 1586833.26','Ixy = 0.00','Ixz = 0.00'],['Iyx = 0.00','Iyy = 16624612.70','Iyz = 0.00'],['Izx = 0.00','Izy = 0.00','Izz = 16624612.70']])}`);

element('sw-check', `
:host{display:block}
label{display:flex;align-items:center;height:19px;gap:3px}
input{appearance:none;width:11px;height:11px;margin:0;border:1px solid #333;background:#fff;display:grid;place-items:center}
input:checked::after{content:"";width:6px;height:3px;border:solid #222;border-width:0 0 1px 1px;transform:rotate(-45deg);margin-bottom:2px}
`, e => `<label><input type="checkbox"${e.hasAttribute('checked')?' checked':''}><span>${at(e,'label')}</span></label>`);

element('sw-dialog', `
:host{display:flex;flex-direction:column;border:1px solid #666;background:#f0f0f0;box-shadow:0 2px 12px rgba(0,0,0,.4);font-size:9px}
header{display:flex;align-items:center;height:26px;background:#fff;padding-left:6px}
h2{flex:1;margin:0 0 0 5px;font:10px/14px "Open Sans","Noto Sans CJK TC",sans-serif}
header button{width:39px;height:26px}
.body{padding:4px 24px 13px 12px}
.top{display:flex;align-items:center}
.top sw-icon{align-self:flex-start;margin:4px 10px 0 0}
.files{width:258px;height:53px;border:2px solid #5aade4;background:#cfe4f8;padding:0 1px;line-height:12px}
.push{height:19px;border:1px solid #adadad;background:#e1e1e1;white-space:nowrap}
.top .push{margin-left:auto;width:63px}
.main{margin-left:26px}
.row{display:flex;margin:4px 0;gap:17px}
.combo{display:flex;align-items:center;justify-content:flex-end;gap:4px;margin-right:1px}
select{appearance:none;width:186px;height:19px;margin:0;border:1px solid #777;border-radius:0;background:#fff;color:#111;padding:0 3px;font:11px/15px "Noto Sans CJK TC",sans-serif}
.box{display:grid}
.box>*{grid-area:1/1}
.box svg{width:8px;height:8px;justify-self:end;align-self:center;margin-right:4px;pointer-events:none}
sw-report{width:335px;height:405px;margin-top:4px}
.foot{display:grid;grid-template-columns:126px 119px 104px;margin-top:8px}
`, `
<header><sw-icon name="scale" size="14"></sw-icon><h2 class="own">物質特性</h2>
<button aria-label="minimize"><sw-icon name="thinMin" size="14"></sw-icon></button><button aria-label="maximize" disabled><sw-icon name="maxOff" size="14"></sw-icon></button><button aria-label="close"><sw-icon name="close" size="14"></sw-icon></button></header>
<div class="body">
 <div class="top"><sw-icon name="part"></sw-icon><div class="files">3-11.SLDPRT</div><button class="push">選項(O)...</button></div>
 <div class="main">
  <div class="row"><button class="push" style="width:164px">取代質量屬性...</button><button class="push" style="width:77px">重新計算(R)</button></div>
  <sw-check checked label="包括隱藏的本體/零組件(H)"></sw-check>
  <sw-check label="產生質量中心特徵"></sw-check>
  <sw-check label="顯示熔珠質量"></sw-check>
  <div class="combo"><label for="cs">報告相對於下列的座標值:</label><span class="box"><select id="cs"><option>-- 預設 --</option></select><svg viewBox="0 0 8 8" fill="none" stroke="#444"><path d="M0 2.500l4 4 4-4"/></svg></span></div>
  <sw-report></sw-report>
  <div class="foot"><button class="push" style="width:75px">說明</button><button class="push" style="width:78px">列印(P)...</button><button class="push" style="width:104px">複製至剪貼簿(C)</button></div>
 </div>
</div>`);

element('sw-app', `
:host{display:flex;flex-direction:column;height:100vh;background:#f8f8f8;position:relative}
main{display:flex;flex:1;min-height:0}
.work{flex:1;min-width:0;display:flex;flex-direction:column}
.area{flex:1;min-height:0;display:flex}
.tree{width:207px;flex:none;background:#c3c8d4}
sw-dialog{position:absolute;left:37px;top:66px;width:413px}
`, `
<sw-titlebar></sw-titlebar><sw-toolrow></sw-toolrow><sw-ribbon></sw-ribbon>
<main><sw-sidebar></sw-sidebar><div class="work"><div class="area"><div class="tree"></div><sw-viewport></sw-viewport></div><sw-tabs></sw-tabs></div><sw-taskpane></sw-taskpane></main>
<sw-status></sw-status><sw-dialog></sw-dialog>`);
</script>
</body>
</html>
